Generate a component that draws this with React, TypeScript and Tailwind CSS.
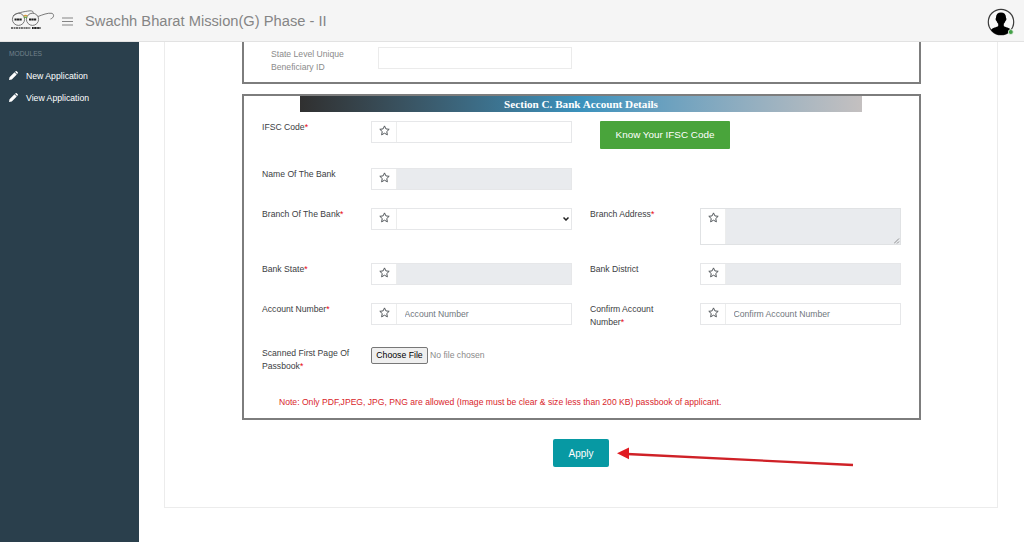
import type { ReactNode } from "react"

interface LabelProps {
  children: ReactNode
  required?: boolean
  className: string
}

interface FieldProps {
  placeholder?: string
  disabled?: boolean
  children?: ReactNode
}

const modules = ["New Application", "View Application"]

const Star = () => (
  <svg className="mt-[2.500px] h-[11px] w-[11px]" viewBox="0 0 22 22" fill="none" stroke="#4b5054" strokeWidth="1.9" strokeLinejoin="round">
    <path d="M11 1.800l2.800 6 6.600.8-4.900 4.500 1.300 6.600-5.800-3.300-5.800 3.300 1.300-6.600-4.900-4.500 6.600-.8z" />
  </svg>
)

const Pencil = () => (
  <svg className="mb-[3px] h-[9px] w-[9px]" viewBox="0 0 18 18" fill="#fff">
    <path d="M0 18l1-5.500L11 2.500l4.500 4.500L5.500 17zM12 1.700L13.400.5q1-.9 2 0l2.100 2.100q.9 1 0 2L16.200 6z" />
  </svg>
)

const Glasses = () => (
  <svg className="h-[22px] w-[46px]" viewBox="0 0 46 22" fill="none" stroke="#6b6b6b" strokeWidth="0.9">
    <circle cx="8.500" cy="9.300" r="6.100" />
    <circle cx="22.500" cy="9.300" r="6.100" />
    <path d="M13.800 6.300Q15.500 4.500 17.200 6.300" stroke="#d89a3a" strokeWidth="1.300" />
    <path d="M14 7.800Q15.500 6.500 17 7.800" stroke="#64a548" strokeWidth="1.300" />
    <path d="M3 6C6 3 14 1.500 20 .8q4 0 3 2.500M28 6.500C32 5 38 2.500 42 3.300c2.500 1.200 2 4.500-1.500 5.700" />
    <path d="M4.500 9.500h7.500M19 9.500h7.500" stroke="#222" strokeWidth="1.800" strokeDasharray="2.200 .3" />
    <path d="M1 18h19.500" stroke="#444" strokeWidth="1.400" strokeDasharray="2.300 .6 1.400 .5" />
    <path d="M22 18h8.500" stroke="#222" strokeWidth="2.200" strokeDasharray="1.700 .5 2.400 .6" />
  </svg>
)

const Label = ({ children, required, className }: LabelProps) => (
  <label className={`${className} shrink-0 text-[8.650px] leading-[13px] text-[#3c4043]`}>
    {children}
    {required && <span className="text-red-600">*</span>}
  </label>
)

const Field = ({ placeholder, disabled, children }: FieldProps) => (
  <div className="flex h-[22px] w-[201px] shrink-0 border border-[#e6e7e9]">
    <span className="flex w-[25px] shrink-0 justify-center border-r border-[#eceded]">
      <Star />
    </span>
    {children ?? (
      <input
        disabled={disabled}
        placeholder={placeholder}
        className="min-w-0 flex-1 px-[7.500px] pt-px text-[8.650px] placeholder:text-[#70777d] disabled:bg-[#e9ebee]"
      />
    )}
  </div>
)

const Header = () => (
  <header className="flex h-[42px] shrink-0 items-center border-b border-[#e2e2e2] bg-[#f5f5f5] pr-[9px] pl-[10px]">
    <Glasses />
    <svg className="mt-[2px] ml-[6px] h-[9px] w-[11px]" viewBox="0 0 11 9" stroke="#858585" strokeWidth="1.200">
      <path d="M0 1h11M0 4.500h11M0 8h11" />
    </svg>
    <h1 className="ml-[12px] text-[14.700px] leading-5 whitespace-nowrap text-[#858585]">
      Swachh Bharat Mission(G) Phase - II
    </h1>
    <svg className="mt-[2px] ml-auto h-7 w-7" viewBox="0 0 28 28">
      <circle cx="14" cy="14" r="12.700" fill="#f8f8f8" stroke="#3b3b3b" strokeWidth="1.200" />
      <path d="M14 4.500c3.300 0 5.200 2 5 5.500.8.300.3 2.700-.6 3-.4 1.500-1 2.300-1.600 2.800v2.200c1 1.300 6 1.500 7.200 4A12.400 12.400 0 0 1 4 22c1.200-2.500 6.200-2.700 7.200-4v-2.200c-.6-.5-1.200-1.300-1.600-2.800-.9-.3-1.400-2.700-.6-3-.2-3.500 1.700-5.500 5-5.500z" fill="#000" />
      <circle cx="23.800" cy="24" r="2.500" fill="#43a047" stroke="#f5f5f5" strokeWidth="0.800" />
    </svg>
  </header>
)

const Sidebar = () => (
  <aside className="w-[139px] shrink-0 bg-[#2a3f4c] pt-[5px]">
    <h2 className="pl-[9px] text-[6.700px] leading-[13px] text-[#71818b]">MODULES</h2>
    <nav className="mt-[6px]">
      {modules.map((name) => (
        <a key={name} className="flex h-[22px] items-center gap-[8px] pl-[9px] text-[8.700px] text-white">
          <Pencil />
          {name}
        </a>
      ))}
    </nav>
  </aside>
)

const BankDetails = () => (
  <section className="mt-[10px] h-[326px] border-2 border-[#7d7d7d]">
    <h3 className="ml-[56px] h-[16px] w-[562px] bg-linear-to-r from-[#303030] via-[#3a92bd] to-[#c4c0c0] text-center font-['Liberation_Serif',serif] text-[11.150px] leading-[16px] font-bold text-white">
      Section C. Bank Account Details
    </h3>
    <form className="pt-[9px] pl-[18px]">
      <div className="flex h-[47px]">
        <Label required className="w-[109px]">IFSC Code</Label>
        <Field />
        <button type="button" className="ml-[28px] h-[28px] w-[130px] rounded-[1px] bg-[#49a43b] text-[9.900px] text-white">
          Know Your IFSC Code
        </button>
      </div>
      <div className="flex h-[40px]">
        <Label className="w-[109px]">Name Of The Bank</Label>
        <Field disabled />
      </div>
      <div className="flex h-[55px]">
        <Label required className="w-[109px]">Branch Of The Bank</Label>
        <Field>
          <div className="flex flex-1 items-center justify-end pr-[2px]">
            <svg className="h-[4px] w-[6px]" viewBox="0 0 6 4" fill="none" stroke="#222" strokeWidth="1.500">
              <path d="M.5 .5L3 3 5.500 .5" />
            </svg>
          </div>
        </Field>
        <Label required className="ml-[18px] w-[110px]">Branch Address</Label>
        <div className="flex h-[37px] w-[201px] border border-[#e0e2e4]">
          <span className="flex w-[25px] shrink-0 justify-center border-r border-[#eceded]">
            <Star />
          </span>
          <div className="flex flex-1 items-end justify-end bg-[#e9ebee]">
            <svg className="h-[6px] w-[6px]" viewBox="0 0 6 6" stroke="#777" strokeWidth="0.800">
              <path d="M0 5.500L5 .5M3 5.500l2-2" />
            </svg>
          </div>
        </div>
      </div>
      <div className="flex h-[40px]">
        <Label required className="w-[109px]">Bank State</Label>
        <Field disabled />
        <Label className="ml-[18px] w-[110px]">Bank District</Label>
        <Field disabled />
      </div>
      <div className="flex h-[44px]">
        <Label required className="w-[109px]">Account Number</Label>
        <Field placeholder="Account Number" />
        <Label required className="ml-[18px] w-[110px] pr-[30px]">Confirm Account Number</Label>
        <Field placeholder="Confirm Account Number" />
      </div>
      <div className="flex h-[48px]">
        <Label required className="w-[109px] pr-[10px]">Scanned First Page Of Passbook</Label>
        <button type="button" className="h-[17px] w-[57px] rounded-[2px] border border-[#777] bg-[#efefef] text-[8.700px] leading-none whitespace-nowrap text-black">
          Choose File
        </button>
        <span className="ml-[2px] text-[8.650px] leading-[17px] text-[#8b8b8b]">No file chosen</span>
      </div>
      <p className="pl-[17px] text-[8.600px] leading-[14px] whitespace-nowrap text-[#d9252b]">
        Note: Only PDF,JPEG, JPG, PNG are allowed (Image must be clear &amp; size less than 200 KB) passbook of applicant.
      </p>
    </form>
  </section>
)

export default function App() {
  return (
    <div className="flex h-[542px] w-[1024px] flex-col overflow-hidden bg-white font-['Liberation_Sans',Arial,sans-serif]">
      <Header />
      <div className="flex flex-1">
        <Sidebar />
        <main className="ml-[25px] h-[466px] w-[834px] border border-t-0 border-[#ececec] pr-[76px] pl-[77px]">
          <section className="flex h-[42px] border-2 border-t-0 border-[#7d7d7d] pt-[5px] pl-[27px]">
            <label className="w-[107px] pt-px pr-[20px] text-[8.650px] leading-[13px] text-[#8b8b8b]">
              State Level Unique Beneficiary ID
            </label>
            <input className="h-[22px] w-[194px] border border-[#ebebeb]" />
          </section>
          <BankDetails />
          <div className="relative mt-[19px] flex">
            <button type="button" className="ml-[311px] h-[28px] w-[56px] rounded-[2px] bg-[#0799a3] text-[10px] text-white">
              Apply
            </button>
            <svg className="absolute top-[8px] left-[375px] h-[22px] w-[238px]" viewBox="0 0 238 22">
              <path d="M10 7L236 18" stroke="#cf2127" strokeWidth="2.300" />
              <path d="M0 6.200L12 .5v11.800z" fill="#e01b22" />
            </svg>
          </div>
        </main>
      </div>
    </div>
  )
}
